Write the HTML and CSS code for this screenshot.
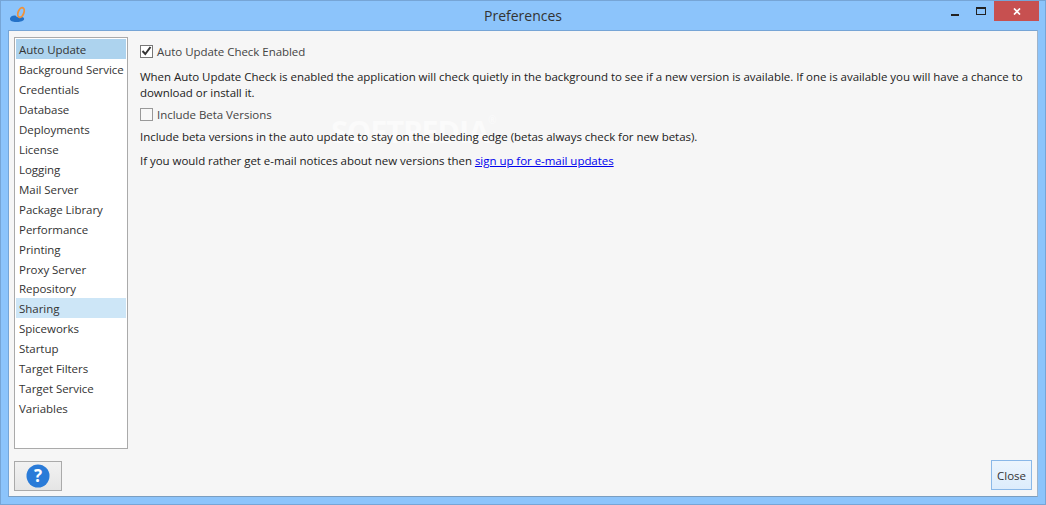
FILE: index.html
```html
<!DOCTYPE html>
<html lang="en">
<head>
<meta charset="utf-8">
<title>Preferences</title>
<link rel="stylesheet" href="styles.css">
</head>
<body>
<div class="window">
  <header class="titlebar">
    <svg class="logo" width="18" height="18" viewBox="0 0 18 18">
      <path d="M1 12.500C1.500 10 4 9 6.500 9.500c1 2 4 2.500 6 1.500 2 0 3 1 2.500 2.500-1 2-5 2.500-8 2.500S.500 15 1 12.500z" fill="#2472c8"/>
      <ellipse cx="12" cy="6.500" rx="2.800" ry="5" transform="rotate(22 12 6.500)" fill="none" stroke="#f0923a" stroke-width="1.800"/>
    </svg>
    <h1 class="title">Preferences</h1>
    <div class="controls">
      <span class="ctl min"><svg width="8" height="2"><rect width="8" height="2" fill="#222"/></svg></span>
      <span class="ctl"><svg width="10" height="8"><rect x=".5" y=".5" width="9" height="7" fill="none" stroke="#222"/><rect width="10" height="2" fill="#222"/></svg></span>
      <span class="ctl close"><svg width="8" height="7" viewBox="0 0 8 7"><path d="M1 .5l6 6M7 .5l-6 6" stroke="#fff" stroke-width="1.700"/></svg></span>
    </div>
  </header>
  <div class="client">
    <div class="main">
      <aside class="side">
        <ul class="list">
          <li class="item selected">Auto Update</li>
          <li class="item">Background Service</li>
          <li class="item">Credentials</li>
          <li class="item">Database</li>
          <li class="item">Deployments</li>
          <li class="item">License</li>
          <li class="item">Logging</li>
          <li class="item">Mail Server</li>
          <li class="item">Package Library</li>
          <li class="item">Performance</li>
          <li class="item">Printing</li>
          <li class="item tight">Proxy Server</li>
          <li class="item">Repository</li>
          <li class="item hover">Sharing</li>
          <li class="item">Spiceworks</li>
          <li class="item">Startup</li>
          <li class="item">Target Filters</li>
          <li class="item">Target Service</li>
          <li class="item">Variables</li>
        </ul>
        <button class="help" type="button" aria-label="Help">
          <svg width="24" height="24" viewBox="0 0 24 24"><circle cx="12" cy="12" r="11.500" fill="#2a7bd8"/><text x="12" y="18" class="qmark" text-anchor="middle">?</text></svg>
        </button>
      </aside>
      <section class="pane">
        <span class="mark">SOFTPEDIA<sup class="reg">®</sup></span>
        <div class="check first"><span class="box"><svg width="11" height="10" viewBox="0 0 11 10"><path d="M1.500 5l2.800 3L9.500 1" fill="none" stroke="#333" stroke-width="2"/></svg></span>Auto Update Check Enabled</div>
        <p class="para one">When Auto Update Check is enabled the application will check quietly in the background to see if a new version is available. If one is available you will have a chance to download or install it.</p>
        <div class="check second"><span class="box"></span>Include Beta Versions</div>
        <p class="para two">Include beta versions in the auto update to stay on the bleeding edge (betas always check for new betas).</p>
        <p class="para three">If you would rather get e-mail notices about new versions then <a class="link" href="#">sign up for e-mail updates</a></p>
      </section>
    </div>
    <div class="foot"><button class="closebtn" type="button">Close</button></div>
  </div>
</div>
</body>
</html>
```
FILE: styles.css
```css
* { box-sizing: border-box; }
html, body { margin: 0; height: 100%; }
body { font-family: "Open Sans", "Noto Sans", sans-serif; font-size: 11.500px; letter-spacing: -.04px; color: #222; overflow: hidden; }
.window { width: 1046px; height: 505px; background: #8cc4fb; border: 1px solid #76a5d6; display: flex; flex-direction: column; padding: 0 7px 7px; }
.titlebar { height: 29px; display: flex; align-items: center; position: relative; justify-content: center; flex: none; }
.logo { position: absolute; left: 1px; top: 5px; }
.title { margin: 0; font-weight: 400; font-size: 14px; letter-spacing: 0; color: #333; }
.controls { position: absolute; right: -1px; top: 0; display: flex; align-items: flex-start; }
.ctl { width: 26px; height: 20px; display: flex; align-items: center; justify-content: center; }
.min { padding-top: 7px; }
.ctl.close { width: 45px; background: #c75050; }
.client { flex: 1; background: #f6f6f6; border: 1px solid #76a5d6; border-bottom-color: #7b9ec0; border-right-color: #9fb3c8; display: flex; flex-direction: column; padding: 6px 5px; min-height: 0; }
.main { flex: 1; display: flex; min-height: 0; }
.side { width: 114px; flex: none; }
.list { margin: 0; padding: 1px; list-style: none; height: 412px; background: #fff; border: 1px solid #aaa; }
.item { height: 20px; line-height: 21px; padding-left: 3px; color: #333; white-space: nowrap; }
.tight { height: 19px; }
.selected { background: #add3ee; }
.hover { background: #cde6f7; }
.help { display: flex; margin: 12px 0 0; padding: 0; width: 48px; height: 30px; align-items: center; justify-content: center; background: linear-gradient(#f2f2f2, #e5e5e5); border: 1px solid #aaa; }
.qmark { font-family: "Open Sans", sans-serif; font-weight: 700; font-size: 17px; fill: #fff; }
.pane { flex: 1; position: relative; padding: 6px 6px 0 12px; min-width: 0; }
.check { display: flex; align-items: center; height: 16px; color: #444; position: relative; }
.box { width: 13px; height: 13px; margin-right: 4px; background: #fff; border: 1px solid #777; display: flex; align-items: center; justify-content: center; flex: none; }
.second .box { border-color: #999; background: #f8f8f8; }
.para { margin: 0; line-height: 16px; position: relative; }
.one { margin-top: 10px; }
.second { margin-top: 5px; }
.two { margin-top: 7px; }
.three { margin-top: 8px; }
.link { color: #00e; text-decoration: underline; }
.mark { position: absolute; left: 203px; top: 76px; font-size: 31px; line-height: 36px; letter-spacing: -1.200px; font-weight: 700; color: #fbfbfb; white-space: nowrap; }
.reg { font-size: 10px; font-weight: 400; letter-spacing: 0; vertical-align: top; line-height: 14px; }
.foot { display: flex; justify-content: flex-end; flex: none; }
.closebtn { width: 41px; height: 30px; margin: -30px 0 0; padding: 0; font: inherit; color: #333; background: linear-gradient(#ecf5fd, #dcecfc); border: 1px solid #8ab8e8; }
```
